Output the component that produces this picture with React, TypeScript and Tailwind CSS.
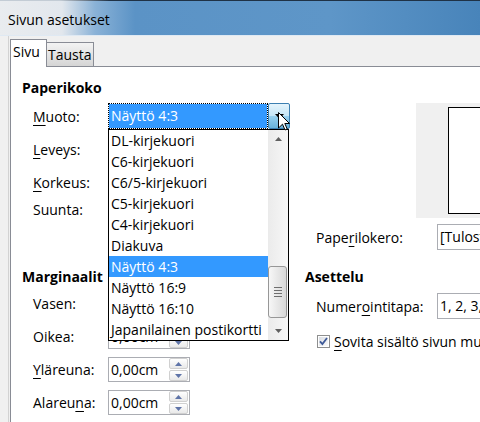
import React from "react";

function U({ children }: { children: React.ReactNode }) {
  return <span className="underline decoration-1 underline-offset-[3px]">{children}</span>;
}

function Tri({ up, color, w = 7, h = 4 }: { up?: boolean; color: string; w?: number; h?: number }) {
  return (
    <svg width={w} height={h} viewBox={`0 0 ${w} ${h}`} className="block">
      {up ? (
        <path d={`M0 ${h} L${w / 2} 0 L${w} ${h} Z`} fill={color} />
      ) : (
        <path d={`M0 0 L${w} 0 L${w / 2} ${h} Z`} fill={color} />
      )}
    </svg>
  );
}

function SpinBtn({ up }: { up?: boolean }) {
  return (
    <div className="flex h-[11px] w-[19px] items-center justify-center rounded-[2px] border border-[#d0d0d0] bg-linear-to-b from-white to-[#e9e9e9]">
      <Tri up={up} color="#5f74a8" />
    </div>
  );
}

function SpinField({ value }: { value: string }) {
  return (
    <div className="flex h-[25px] w-[82px] border border-[#abadb3] bg-white">
      <div className="flex-1 pl-[2px] leading-[23px]">{value}</div>
      <div className="flex flex-col justify-center gap-px pr-px">
        <SpinBtn up />
        <SpinBtn />
      </div>
    </div>
  );
}

const items = [
  "DL-kirjekuori",
  "C6-kirjekuori",
  "C6/5-kirjekuori",
  "C5-kirjekuori",
  "C4-kirjekuori",
  "Diakuva",
  "Näyttö 4:3",
  "Näyttö 16:9",
  "Näyttö 16:10",
  "Japanilainen postikortti",
];

function Combo() {
  return (
    <div className="relative flex h-[26px] w-[182px]">
      <div className="h-[26px] w-[160px] bg-white">
        <div className="h-full w-full border border-dotted border-black bg-[#3399ff] bg-clip-padding pl-[2px] leading-[24px] text-white">
          Näyttö 4:3
        </div>
      </div>
      <div className="flex h-[26px] w-[22px] items-center justify-center rounded-[2px] border border-[#3c7fb1] bg-[linear-gradient(180deg,#e5f4fc_0%,#c4e5f6_50%,#98d1ef_50%,#68b3db_100%)]">
        <Tri color="#000" w={9} h={5} />
      </div>

      <div className="absolute left-0 top-[26px] z-20 flex h-[212px] w-[181px] border border-black bg-white">
        <div className="flex w-[159px] flex-col">
          {items.map((it) => (
            <div
              key={it}
              className={
                it === "Näyttö 4:3"
                  ? "h-[21px] whitespace-nowrap bg-[#3399ff] pl-[2px] leading-[21px] text-white"
                  : "h-[21px] whitespace-nowrap pl-[2px] leading-[21px]"
              }
            >
              {it}
            </div>
          ))}
        </div>
        <div className="flex w-[20px] flex-col bg-linear-to-r from-[#ebebeb] to-[#f7f7f7]">
          <div className="flex h-[17px] items-center justify-center">
            <Tri up color="#606060" />
          </div>
          <div className="flex-1 pt-[119px]">
            <div className="flex h-[52px] w-[19px] flex-col items-center justify-center gap-[2px] rounded-[3px] border border-[#979797] bg-linear-to-r from-[#f7f7f7] to-[#d8d8d8]">
              <div className="h-px w-[8px] bg-[#6f6f6f]" />
              <div className="h-px w-[8px] bg-[#6f6f6f]" />
              <div className="h-px w-[8px] bg-[#6f6f6f]" />
              <div className="h-px w-[8px] bg-[#6f6f6f]" />
            </div>
          </div>
          <div className="flex h-[19px] items-center justify-center">
            <Tri color="#606060" />
          </div>
        </div>
      </div>

      <svg width="12" height="19" viewBox="0 0 12 19" className="absolute left-[170px] top-[9px] z-30">
        <path d="M0.5 0.5 V16 L4.5 12.2 L7 18 L9.2 17 L6.8 11.5 H11.5 Z" fill="#fff" stroke="#000" strokeWidth="1" />
      </svg>
    </div>
  );
}

function Checkbox() {
  return (
    <svg width="13" height="13" viewBox="0 0 13 13" className="block">
      <defs>
        <linearGradient id="cbg" x1="0" y1="0" x2="1" y2="1">
          <stop offset="0" stopColor="#d9dde3" />
          <stop offset="1" stopColor="#fbfbfb" />
        </linearGradient>
      </defs>
      <rect x="0.5" y="0.5" width="12" height="12" fill="#fff" stroke="#8e8f8f" />
      <rect x="2" y="2" width="9" height="9" fill="url(#cbg)" />
      <path d="M3 6.3 L5.4 9 L10 3" fill="none" stroke="#3e5a98" strokeWidth="1.8" />
    </svg>
  );
}

export default function App() {
  return (
    <div className="relative h-[422px] w-[480px] overflow-hidden bg-[#f0f0f0] font-['Open_Sans',sans-serif] text-[14px] leading-[19px] text-black">
      {/* Title bar */}
      <div className="h-[36px] border-b border-[#dfe9f3] bg-[linear-gradient(90deg,#e9ecef_0px,#e2e7ed_62px,#8ab2d7_95px,#5b93c6_135px,#5e96c8_330px,#4884ba_480px)]">
        <div className="h-px bg-[linear-gradient(90deg,#c3ccd5_0px,#c3ccd5_60px,#1f3246_110px,#1f3246_480px)]" />
        <div className="pl-[8px] pt-[9px]">Sivun asetukset</div>
      </div>

      {/* Body */}
      <div className="pl-[8px]">
        <div className="border-l border-[#d2d2d2] pl-px">
          {/* Tabs */}
          <div className="flex h-[30px] items-end">
            <div className="relative z-10 -mb-px h-[28px] w-[37px] border border-b-0 border-[#898c95] bg-white pl-[2px] pt-[2px]">
              Sivu
            </div>
            <div className="h-[24px] w-[47px] border-r border-t border-[#898c95] bg-linear-to-b from-[#f3f3f3] to-[#d5d5d5] pl-px pt-[2px]">
              Tausta
            </div>
          </div>

          {/* Panel */}
          <div className="h-[400px] border-l border-t border-[#898c95] bg-white pl-[11px] pt-[11px]">
            {/* Top section */}
            <div className="flex items-start">
              <div className="w-[283px] shrink-0">
                <div className="h-[20px] font-bold leading-[20px]">Paperikoko</div>
                <div className="mt-[5px] flex h-[26px] items-center pl-[11px]">
                  <div className="w-[75px]">
                    <U>M</U>uoto:
                  </div>
                  <Combo />
                </div>
                <div className="mt-[7px] flex h-[26px] items-center pl-[11px]">
                  <div className="w-[75px]">
                    <U>L</U>eveys:
                  </div>
                </div>
                <div className="mt-[7px] flex h-[26px] items-center pl-[11px]">
                  <div className="w-[75px]">
                    <U>K</U>orkeus:
                  </div>
                </div>
                <div className="mt-[2px] flex h-[25px] items-center pl-[11px]">
                  <div className="w-[75px]">Suunta:</div>
                </div>
              </div>

              <div className="flex-1">
                <div className="ml-[111px] mt-[25px] h-[115px] w-[140px] bg-[#f0f0f0] pl-[32px] pt-[4px]">
                  <div className="h-[107px] w-[90px] border border-black bg-white" />
                </div>
                <div className="mt-[6px] flex h-[26px] items-center pl-[11px]">
                  <div className="w-[121px] shrink-0">
                    Pape<U>r</U>ilokero:
                  </div>
                  <div className="h-[26px] w-[170px] shrink-0 whitespace-nowrap border border-[#abadb3] bg-white pl-[2px] leading-[24px]">
                    [Tulostimen asetuksista]
                  </div>
                </div>
              </div>
            </div>

            {/* Bottom section */}
            <div className="mt-[17px] flex items-start">
              <div className="w-[283px] shrink-0">
                <div className="h-[20px] font-bold leading-[20px]">Marginaalit</div>
                <div className="mt-[4px] flex h-[25px] items-center pl-[11px]">
                  <div className="w-[75px]">Vasen:</div>
                </div>
                <div className="mt-[8px] flex h-[25px] items-center pl-[11px]">
                  <div className="w-[75px]">Oikea:</div>
                  <SpinField value="0,00cm" />
                </div>
                <div className="mt-[8px] flex h-[25px] items-center pl-[11px]">
                  <div className="w-[75px]">
                    <U>Y</U>läreuna:
                  </div>
                  <SpinField value="0,00cm" />
                </div>
                <div className="mt-[8px] flex h-[25px] items-center pl-[11px]">
                  <div className="w-[75px]">
                    Alareu<U>n</U>a:
                  </div>
                  <SpinField value="0,00cm" />
                </div>
              </div>

              <div className="flex-1">
                <div className="h-[20px] font-bold leading-[20px]">Asettelu</div>
                <div className="mt-[6px] flex h-[26px] items-center pl-[11px]">
                  <div className="w-[121px] shrink-0">
                    Numer<U>o</U>intitapa:
                  </div>
                  <div className="h-[26px] w-[170px] shrink-0 whitespace-nowrap border border-[#abadb3] bg-white pl-[2px] leading-[24px]">
                    1, 2, 3, ...
                  </div>
                </div>
                <div className="mt-[14px] flex h-[17px] items-center gap-[4px] whitespace-nowrap pl-[12px]">
                  <Checkbox />
                  <span>
                    <U>S</U>ovita sisältö sivun mukaan
                  </span>
                </div>
              </div>
            </div>
          </div>
        </div>
      </div>
    </div>
  );
}
